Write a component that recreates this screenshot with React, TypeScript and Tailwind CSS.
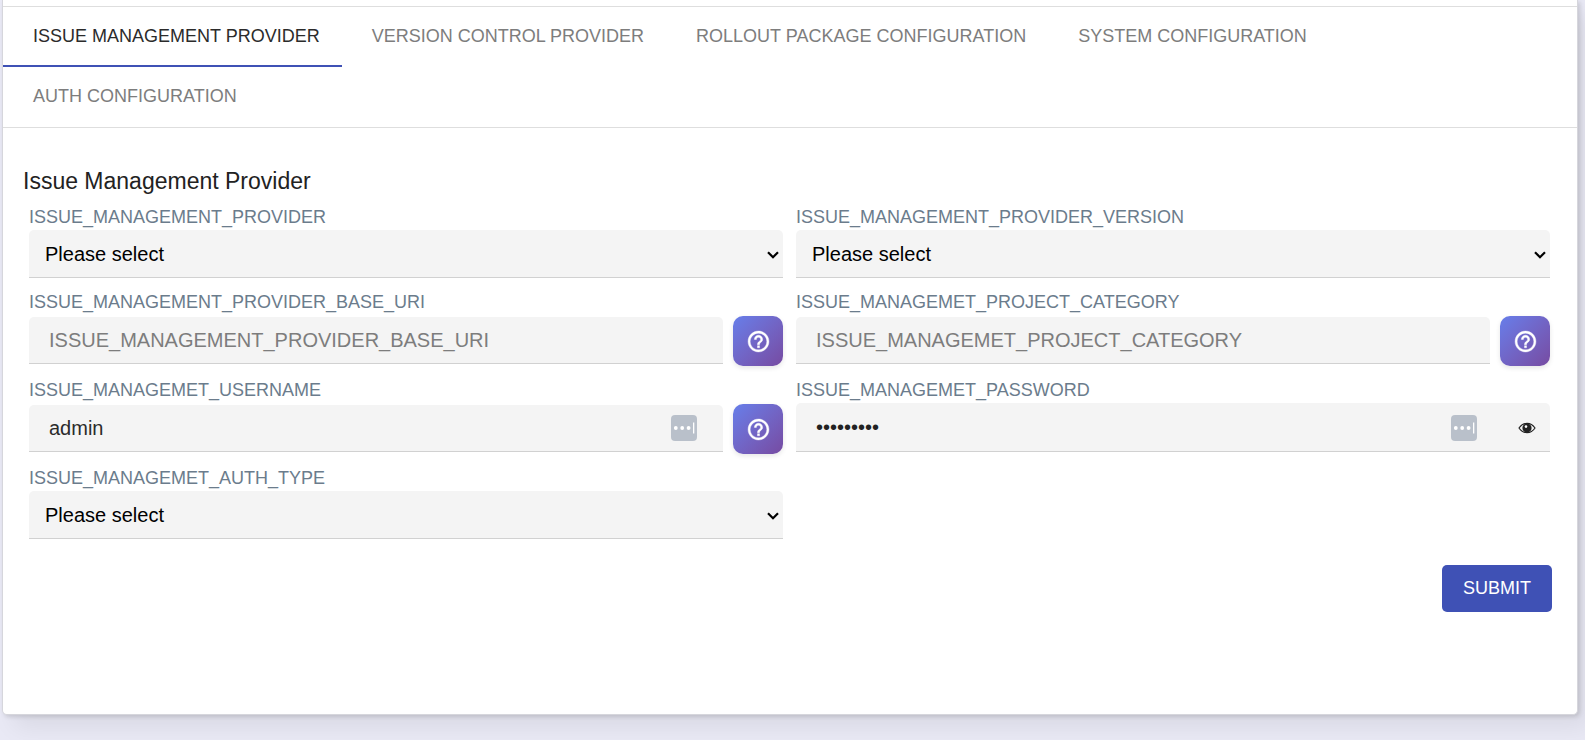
import { useState } from "react";
import type { ReactNode } from "react";

const tabs = [
  "ISSUE MANAGEMENT PROVIDER",
  "VERSION CONTROL PROVIDER",
  "ROLLOUT PACKAGE CONFIGURATION",
  "SYSTEM CONFIGURATION",
  "AUTH CONFIGURATION",
];

const fieldBox =
  "w-full rounded-t-[5px] border-b border-[#d1d1d1] bg-[#f4f4f4] text-[20px] leading-6 outline-none";

function Label({ name }: { name: string }) {
  return (
    <label htmlFor={name} className="mb-[6px] block text-[18px] leading-[14px] text-[#6b7c8c]">
      {name}
    </label>
  );
}

function SelectField({ name }: { name: string }) {
  return (
    <div className="min-w-0">
      <Label name={name} />
      <div className="relative">
        <select id={name} className={`${fieldBox} block h-12 appearance-none px-4 text-black`}>
          <option>Please select</option>
        </select>
        <svg
          viewBox="0 0 12 8"
          className="pointer-events-none absolute top-[21px] right-1 h-2 w-3"
          fill="none"
          stroke="#000"
          strokeWidth="2.200"
          aria-hidden="true"
        >
          <path d="M1 1.200L6 6.200L11 1.200" />
        </svg>
      </div>
    </div>
  );
}

function HelpButton() {
  return (
    <button
      type="button"
      aria-label="Help"
      className="flex size-[50px] shrink-0 items-center justify-center rounded-[10px] bg-linear-135 from-[#667eea] to-[#764ba2] text-white shadow-[0_2px_5px_rgba(0,0,0,0.1)]"
    >
      <svg
        viewBox="0 0 24 24"
        className="size-[25px]"
        fill="currentColor"
        stroke="currentColor"
        strokeWidth="0.4"
        aria-hidden="true"
      >
        <path d="M11 18h2v-2h-2v2zm1-16C6.480 2 2 6.480 2 12s4.480 10 10 10 10-4.480 10-10S17.520 2 12 2zm0 18c-4.410 0-8-3.590-8-8s3.590-8 8-8 8 3.590 8 8-3.590 8-8 8zm0-14c-2.210 0-4 1.790-4 4h2c0-1.100.9-2 2-2s2 .9 2 2c0 2-3 1.750-3 5h2c0-2.250 3-2.500 3-5 0-2.210-1.790-4-4-4z" />
      </svg>
    </button>
  );
}

function KeyBadge() {
  return (
    <svg viewBox="0 0 26 26" className="size-[26px]" aria-hidden="true">
      <rect width="26" height="26" rx="4" fill="#b9c0ca" />
      <circle cx="4.800" cy="13" r="1.900" fill="#fff" />
      <circle cx="11.200" cy="13" r="1.900" fill="#fff" />
      <circle cx="17.600" cy="13" r="1.900" fill="#fff" />
      <rect x="22" y="7.500" width="1.300" height="11" fill="#fff" />
    </svg>
  );
}

function EyeIcon() {
  return (
    <svg viewBox="0 0 18 12" className="h-3 w-[18px]" aria-hidden="true">
      <path
        d="M1 6C3.200 2.700 5.800 1.300 9 1.300S14.800 2.700 17 6C14.800 9.300 12.200 10.700 9 10.700S3.200 9.300 1 6z"
        fill="#f4f4f4"
        stroke="#222"
        strokeWidth="1.200"
      />
      <circle cx="9" cy="6" r="4.600" fill="#222" />
      <circle cx="8" cy="4.600" r="1.300" fill="#fff" />
    </svg>
  );
}

function TextField({ name, value, badge }: { name: string; value?: string; badge?: ReactNode }) {
  return (
    <div className="min-w-0">
      <Label name={name} />
      <div className="flex items-start gap-[10px] pt-px">
        <div className="relative mt-px min-w-0 flex-1">
          <input
            id={name}
            type="text"
            defaultValue={value}
            placeholder={name}
            className={`${fieldBox} block h-[47px] px-5 text-[#2b2b2b] placeholder:text-[#7d7d7d]`}
          />
          {badge && <span className="absolute top-[10px] right-[26px]">{badge}</span>}
        </div>
        <HelpButton />
      </div>
    </div>
  );
}

function PasswordField({ name }: { name: string }) {
  const [visible, setVisible] = useState(false);
  return (
    <div className="min-w-0">
      <Label name={name} />
      <div className="relative">
        <input
          id={name}
          type={visible ? "text" : "password"}
          defaultValue="adminpass"
          className={`${fieldBox} block h-[49px] px-5 text-[#222]`}
        />
        <span className="absolute top-3 right-[73px]">
          <KeyBadge />
        </span>
        <button
          type="button"
          aria-label="Show password"
          onClick={() => setVisible(!visible)}
          className="absolute top-[19px] right-[14px]"
        >
          <EyeIcon />
        </button>
      </div>
    </div>
  );
}

export default function App() {
  const [active, setActive] = useState(0);
  return (
    <div className="min-h-screen bg-[#e9e9f5] pr-[7px] pb-[25px] pl-[2px] font-['Liberation_Sans',Arial,sans-serif]">
      <main className="rounded-b-[5px] border border-t-0 border-[#d6d6dc] bg-white pt-[6px] pb-[102px] shadow-[2px_2px_4px_rgba(0,0,0,0.13),12px_12px_24px_rgba(0,0,0,0.07)]">
        <div role="tablist" className="flex flex-wrap border-y border-[#dedede]">
          {tabs.map((tab, i) => (
            <button
              key={tab}
              type="button"
              role="tab"
              aria-selected={i === active}
              onClick={() => setActive(i)}
              className={
                i === active
                  ? "h-[60px] border-b-2 border-[#3f51b5] pr-[22px] pl-[30px] text-[18px] text-[#2b2b2b]"
                  : "h-[60px] border-b-2 border-transparent pr-[22px] pl-[30px] text-[18px] text-[#7d7d7d]"
              }
            >
              {tab}
            </button>
          ))}
        </div>
        <form className="px-5 pt-[38px]" onSubmit={(e) => e.preventDefault()}>
          <h1 className="text-[23px] leading-[30px] text-[#222]">Issue Management Provider</h1>
          <div className="mt-[14px] grid grid-cols-2 gap-x-[13px] gap-y-[17px] pr-[7px] pl-[6px]">
            <SelectField name="ISSUE_MANAGEMENT_PROVIDER" />
            <SelectField name="ISSUE_MANAGEMENT_PROVIDER_VERSION" />
            <TextField name="ISSUE_MANAGEMENT_PROVIDER_BASE_URI" />
            <TextField name="ISSUE_MANAGEMET_PROJECT_CATEGORY" />
            <TextField name="ISSUE_MANAGEMET_USERNAME" value="admin" badge={<KeyBadge />} />
            <PasswordField name="ISSUE_MANAGEMET_PASSWORD" />
            <SelectField name="ISSUE_MANAGEMET_AUTH_TYPE" />
          </div>
          <div className="mt-[26px] flex justify-end pr-[5px]">
            <button
              type="submit"
              className="h-[47px] rounded-[5px] bg-[#3f51b5] px-[21px] text-[18px] text-white"
            >
              SUBMIT
            </button>
          </div>
        </form>
      </main>
    </div>
  );
}
